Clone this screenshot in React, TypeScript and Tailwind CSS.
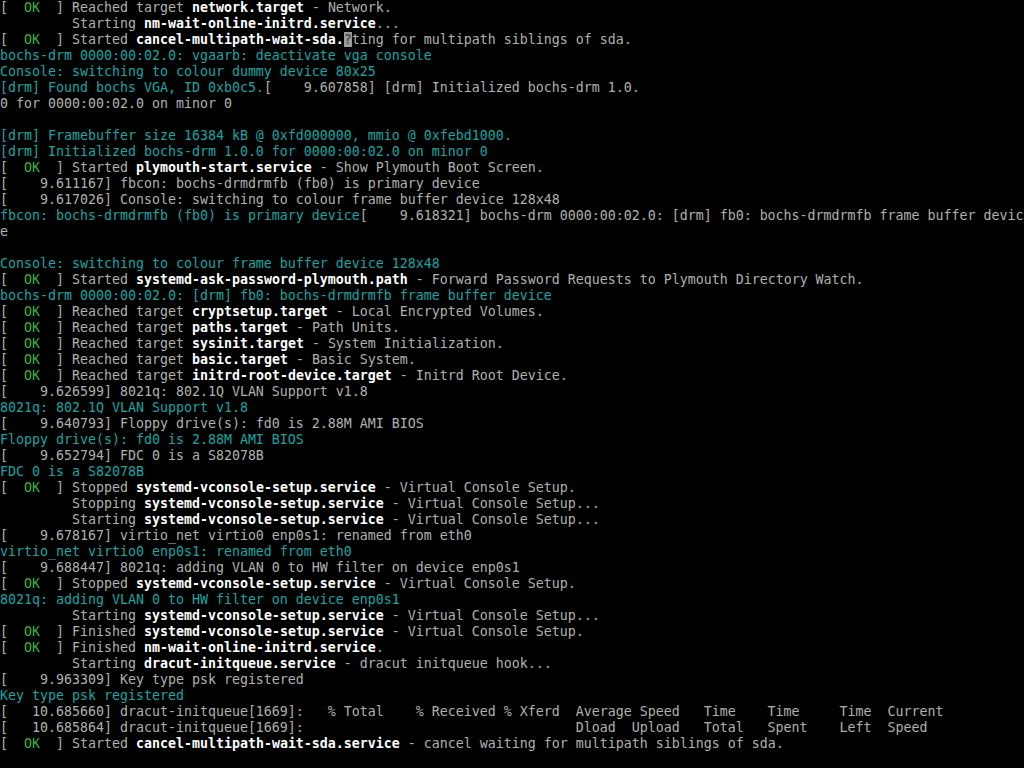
import React from 'react'

type Seg = [string, string]

const G = 'g' // gray
const W = 'w' // bright white
const C = 'c' // cyan
const K = 'k' // green OK
const U = 'u' // cursor block

const ok = (verb: string, unit: string, rest: string): Seg[] => [
  [G, '[  '],
  [K, 'OK'],
  [G, '  ] ' + verb + ' '],
  [W, unit],
  [G, rest],
]

const job = (verb: string, unit: string, rest: string): Seg[] => [
  [G, '         ' + verb + ' '],
  [W, unit],
  [G, rest],
]

const lines: Seg[][] = [
  ok('Reached target', 'network.target', ' - Network.'),
  job('Starting', 'nm-wait-online-initrd.service', '...'),
  [
    [G, '[  '],
    [K, 'OK'],
    [G, '  ] Started '],
    [W, 'cancel-multipath-wait-sda.'],
    [U, '?'],
    [G, 'ting for multipath siblings of sda.'],
  ],
  [[C, 'bochs-drm 0000:00:02.0: vgaarb: deactivate vga console']],
  [[C, 'Console: switching to colour dummy device 80x25']],
  [
    [C, '[drm] Found bochs VGA, ID 0xb0c5.'],
    [G, '[    9.607858] [drm] Initialized bochs-drm 1.0.'],
  ],
  [[G, '0 for 0000:00:02.0 on minor 0']],
  [],
  [[C, '[drm] Framebuffer size 16384 kB @ 0xfd000000, mmio @ 0xfebd1000.']],
  [[C, '[drm] Initialized bochs-drm 1.0.0 for 0000:00:02.0 on minor 0']],
  ok('Started', 'plymouth-start.service', ' - Show Plymouth Boot Screen.'),
  [[G, '[    9.611167] fbcon: bochs-drmdrmfb (fb0) is primary device']],
  [[G, '[    9.617026] Console: switching to colour frame buffer device 128x48']],
  [
    [C, 'fbcon: bochs-drmdrmfb (fb0) is primary device'],
    [G, '[    9.618321] bochs-drm 0000:00:02.0: [drm] fb0: bochs-drmdrmfb frame buffer devic'],
  ],
  [[G, 'e']],
  [],
  [[C, 'Console: switching to colour frame buffer device 128x48']],
  ok('Started', 'systemd-ask-password-plymouth.path', ' - Forward Password Requests to Plymouth Directory Watch.'),
  [[C, 'bochs-drm 0000:00:02.0: [drm] fb0: bochs-drmdrmfb frame buffer device']],
  ok('Reached target', 'cryptsetup.target', ' - Local Encrypted Volumes.'),
  ok('Reached target', 'paths.target', ' - Path Units.'),
  ok('Reached target', 'sysinit.target', ' - System Initialization.'),
  ok('Reached target', 'basic.target', ' - Basic System.'),
  ok('Reached target', 'initrd-root-device.target', ' - Initrd Root Device.'),
  [[G, '[    9.626599] 8021q: 802.1Q VLAN Support v1.8']],
  [[C, '8021q: 802.1Q VLAN Support v1.8']],
  [[G, '[    9.640793] Floppy drive(s): fd0 is 2.88M AMI BIOS']],
  [[C, 'Floppy drive(s): fd0 is 2.88M AMI BIOS']],
  [[G, '[    9.652794] FDC 0 is a S82078B']],
  [[C, 'FDC 0 is a S82078B']],
  ok('Stopped', 'systemd-vconsole-setup.service', ' - Virtual Console Setup.'),
  job('Stopping', 'systemd-vconsole-setup.service', ' - Virtual Console Setup...'),
  job('Starting', 'systemd-vconsole-setup.service', ' - Virtual Console Setup...'),
  [[G, '[    9.678167] virtio_net virtio0 enp0s1: renamed from eth0']],
  [[C, 'virtio_net virtio0 enp0s1: renamed from eth0']],
  [[G, '[    9.688447] 8021q: adding VLAN 0 to HW filter on device enp0s1']],
  ok('Stopped', 'systemd-vconsole-setup.service', ' - Virtual Console Setup.'),
  [[C, '8021q: adding VLAN 0 to HW filter on device enp0s1']],
  job('Starting', 'systemd-vconsole-setup.service', ' - Virtual Console Setup...'),
  ok('Finished', 'systemd-vconsole-setup.service', ' - Virtual Console Setup.'),
  ok('Finished', 'nm-wait-online-initrd.service', '.'),
  job('Starting', 'dracut-initqueue.service', ' - dracut initqueue hook...'),
  [[G, '[    9.963309] Key type psk registered']],
  [[C, 'Key type psk registered']],
  [
    [
      G,
      '[   10.685660] dracut-initqueue[1669]:   % Total    % Received % Xferd  Average Speed   Time    Time     Time  Current',
    ],
  ],
  [
    [
      G,
      '[   10.685864] dracut-initqueue[1669]:                                  Dload  Upload   Total   Spent    Left  Speed',
    ],
  ],
  ok('Started', 'cancel-multipath-wait-sda.service', ' - cancel waiting for multipath siblings of sda.'),
]

const tone: Record<string, string> = {
  g: 'text-[#b0b0b0]',
  w: 'text-white font-bold',
  c: 'text-[#1aa5a5]',
  k: 'text-[#3cb83c]',
  u: 'bg-[#9a9a9a] text-[#3a3a3a]',
}

export default function App() {
  return (
    <div className="h-[768px] w-[1024px] overflow-hidden bg-black font-['DejaVu_Sans_Mono',monospace] text-[13.29px] leading-[16px]">
      {lines.map((line, i) => (
        <div key={i} className="h-4 whitespace-pre">
          {line.map(([t, s], j) => (
            <span key={j} className={tone[t]}>
              {s}
            </span>
          ))}
        </div>
      ))}
    </div>
  )
}
